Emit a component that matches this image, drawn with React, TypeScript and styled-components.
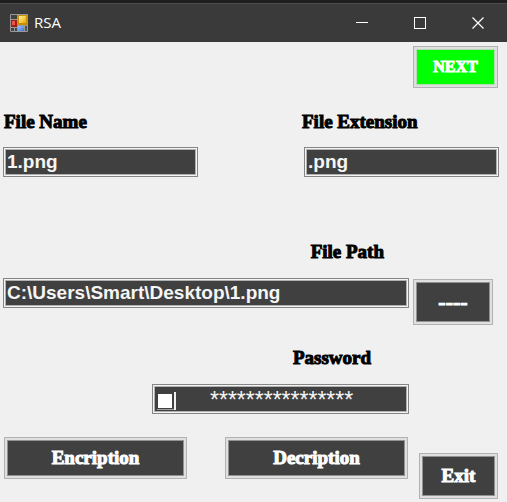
import React, { useState } from "react";
import styled, { createGlobalStyle } from "styled-components";

const GlobalStyle = createGlobalStyle`
  *, *::before, *::after { box-sizing: border-box; }
  body { margin: 0; background: #f0f0f0; }
`;

const displayFont = `"Liberation Serif", "Times New Roman", serif`;
const fieldFont = `"Liberation Sans", Arial, sans-serif`;

const TitleBar = styled.header`
  display: flex;
  align-items: center;
  height: 42px;
  padding-left: 10px;
  border-top: 3px solid #1e1e1e;
  background: #3a3a3a;
  box-shadow: inset 0 1px 0 #4d4d4d;
  color: #fff;
`;

const Title = styled.h1`
  flex: 1;
  margin: 0 0 0 6px;
  padding-bottom: 2px;
  font: 400 15px/20px "Open Sans", "Noto Sans", sans-serif;
`;

const CaptionButton = styled.button`
  display: flex;
  align-items: center;
  justify-content: center;
  width: 58px;
  height: 38px;
  padding: 0;
  border: 0;
  background: transparent;
  color: #fff;
`;

const Form = styled.form`
  padding: 4px 8px 3px 3px;
`;

const TopRow = styled.div`
  display: flex;
  justify-content: flex-end;
  padding-right: 1px;
`;

const NameRow = styled.div`
  display: grid;
  grid-template-columns: 298fr 198fr;
  margin-top: 22px;
`;

const NameCell = styled.div<{ $end?: boolean }>`
  display: flex;
  flex-direction: column;
  gap: 13px;
  align-items: ${(p) => (p.$end ? "flex-end" : "flex-start")};
`;

const Caption = styled.label`
  align-self: flex-start;
  padding-left: 1px;
  color: #000;
  font: 700 19px/24px ${displayFont};
  -webkit-text-stroke: 1px #000;
  white-space: nowrap;
`;

const MainGrid = styled.div`
  display: grid;
  grid-template-columns: minmax(0, 406fr) minmax(0, 80fr);
  column-gap: 4px;
  align-items: start;
  margin-top: 63px;
  padding-right: 6px;
`;

const CaptionLine = styled.div<{ $inset: number }>`
  grid-column: 1;
  display: flex;
  justify-content: flex-end;
  padding: 0 ${(p) => p.$inset}px 14px 0;
`;

const FieldLine = styled.div`
  grid-column: 1;
  display: flex;
  justify-content: flex-end;
`;

const FieldBox = styled.div<{ $width?: number }>`
  display: flex;
  align-items: center;
  width: ${(p) => (p.$width ? `${p.$width}px` : "100%")};
  max-width: 100%;
  height: 30px;
  padding: 3px;
  border: 1px solid #858585;
  background: #404040;
  box-shadow: inset 0 0 0 1px #f4f4f4, inset 0 0 0 2px #b0b0b0;
`;

const TextInput = styled.input<{ $masked?: boolean }>`
  flex: 1;
  min-width: 0;
  height: 24px;
  padding: ${(p) => (p.$masked ? "2px 0 0 34px" : "0")};
  border: 0;
  outline: 0;
  background: transparent;
  color: #f5f5f5;
  font: ${(p) => (p.$masked ? "400 23px/20px" : "700 19px/24px")} ${fieldFont};
`;

const ShowToggle = styled.input`
  appearance: none;
  flex: none;
  width: 19px;
  height: 18px;
  margin: 4px 0 0 1px;
  border: solid #f0f0f0;
  border-width: 0 2px 0 0;
  background: linear-gradient(#fff, #fff) 1px 2px / 14px 14px no-repeat #404040;
  box-shadow: inset 0 -1px 0 #a0a0a0;
`;

const FormButton = styled.button<{ $green?: boolean; $size?: number; $tall?: boolean; $width?: number }>`
  display: block;
  width: ${(p) => (p.$width ? `${p.$width}px` : "100%")};
  height: ${(p) => (p.$tall ? 46 : 42)}px;
  padding: 0 4px;
  border: 1px solid #b2b2b2;
  background: ${(p) => (p.$green ? "#00ff00" : "#404040")};
  box-shadow: inset 0 0 0 2px #dfdfdf, inset 0 0 0 3px ${(p) => (p.$green ? "#b4dcb4" : "#929292")};
  color: #fff;
  font: 700 ${(p) => p.$size ?? 19}px/24px ${displayFont};
  -webkit-text-stroke: 1px #fff;
`;

const BrowseCell = styled.div`
  grid-column: 2;
  padding-top: 1px;
`;

const PasswordCaptionLine = styled(CaptionLine)`
  padding-top: 21px;
`;

const ActionRow = styled.div`
  display: grid;
  grid-template-columns: 183fr 38fr 183fr 11fr 79fr;
  margin-top: 23px;
  padding: 0 1px;
`;

const ActionCell = styled.div<{ $column: number; $low?: boolean }>`
  grid-column: ${(p) => p.$column};
  padding-top: ${(p) => (p.$low ? 16 : 0)}px;
`;

const AppIcon = () => (
  <svg width="18" height="18" viewBox="0 0 18 18" aria-hidden="true">
    <defs>
      <linearGradient id="gold" x1="0" y1="0" x2="1" y2="1">
        <stop offset="0" stopColor="#fff3a0" />
        <stop offset="1" stopColor="#e8a800" />
      </linearGradient>
      <linearGradient id="blue" x1="0" y1="0" x2="1" y2="1">
        <stop offset="0" stopColor="#9cc4ff" />
        <stop offset="1" stopColor="#3874dc" />
      </linearGradient>
    </defs>
    <rect width="18" height="18" rx="1" fill="#999" />
    <rect x="1" y="1" width="6" height="4" fill="#414141" />
    <rect x="1" y="6" width="6" height="7" fill="#a31c16" />
    <rect x="2" y="7" width="3" height="4" fill="#e8574a" />
    <rect x="8" y="1" width="9" height="10" fill="#c98d00" />
    <rect x="9" y="2" width="7" height="7" fill="url(#gold)" />
    <rect x="1" y="14" width="3" height="3" fill="#444" />
    <rect x="5" y="14" width="2" height="3" fill="#444" />
    <rect x="8" y="12" width="6" height="5" fill="url(#blue)" />
    <rect x="15" y="12" width="2" height="5" fill="#555" />
  </svg>
);

export default function App() {
  const [name, setName] = useState("1.png");
  const [extension, setExtension] = useState(".png");
  const [path, setPath] = useState("C:\\Users\\Smart\\Desktop\\1.png");
  const [mask, setMask] = useState("*".repeat(16));

  return (
    <>
      <GlobalStyle />
      <TitleBar>
        <AppIcon />
        <Title>RSA</Title>
        <CaptionButton type="button" aria-label="Minimize">
          <svg width="12" height="12" shapeRendering="crispEdges">
            <rect y="5" width="12" height="1" fill="currentColor" />
          </svg>
        </CaptionButton>
        <CaptionButton type="button" aria-label="Maximize">
          <svg width="12" height="12" shapeRendering="crispEdges">
            <rect x="0.5" y="0.5" width="11" height="11" fill="none" stroke="currentColor" />
          </svg>
        </CaptionButton>
        <CaptionButton type="button" aria-label="Close">
          <svg width="12" height="12">
            <path d="M0.5 0.5 11.5 11.5M11.5 0.5 0.5 11.5" stroke="currentColor" strokeWidth="1.2" />
          </svg>
        </CaptionButton>
      </TitleBar>
      <Form onSubmit={(e) => e.preventDefault()}>
        <TopRow>
          <FormButton type="button" $green $size={16} $width={85}>NEXT</FormButton>
        </TopRow>
        <NameRow>
          <NameCell>
            <Caption htmlFor="name">File Name</Caption>
            <FieldBox $width={195}>
              <TextInput id="name" value={name} onChange={(e) => setName(e.target.value)} />
            </FieldBox>
          </NameCell>
          <NameCell $end>
            <Caption htmlFor="extension">File Extension</Caption>
            <FieldBox $width={195}>
              <TextInput id="extension" value={extension} onChange={(e) => setExtension(e.target.value)} />
            </FieldBox>
          </NameCell>
        </NameRow>
        <MainGrid>
          <CaptionLine $inset={25}>
            <Caption htmlFor="path">File Path</Caption>
          </CaptionLine>
          <FieldLine>
            <FieldBox>
              <TextInput id="path" value={path} onChange={(e) => setPath(e.target.value)} />
            </FieldBox>
          </FieldLine>
          <BrowseCell>
            <FormButton type="button" $size={22} $tall>----</FormButton>
          </BrowseCell>
          <PasswordCaptionLine $inset={38}>
            <Caption htmlFor="password">Password</Caption>
          </PasswordCaptionLine>
          <FieldLine>
            <FieldBox $width={257}>
              <ShowToggle type="checkbox" aria-label="Show password" />
              <TextInput id="password" $masked value={mask} onChange={(e) => setMask(e.target.value)} />
            </FieldBox>
          </FieldLine>
        </MainGrid>
        <ActionRow>
          <ActionCell $column={1}>
            <FormButton type="button">Encription</FormButton>
          </ActionCell>
          <ActionCell $column={3}>
            <FormButton type="button">Decription</FormButton>
          </ActionCell>
          <ActionCell $column={5} $low>
            <FormButton type="button" $tall>Exit</FormButton>
          </ActionCell>
        </ActionRow>
      </Form>
    </>
  );
}
